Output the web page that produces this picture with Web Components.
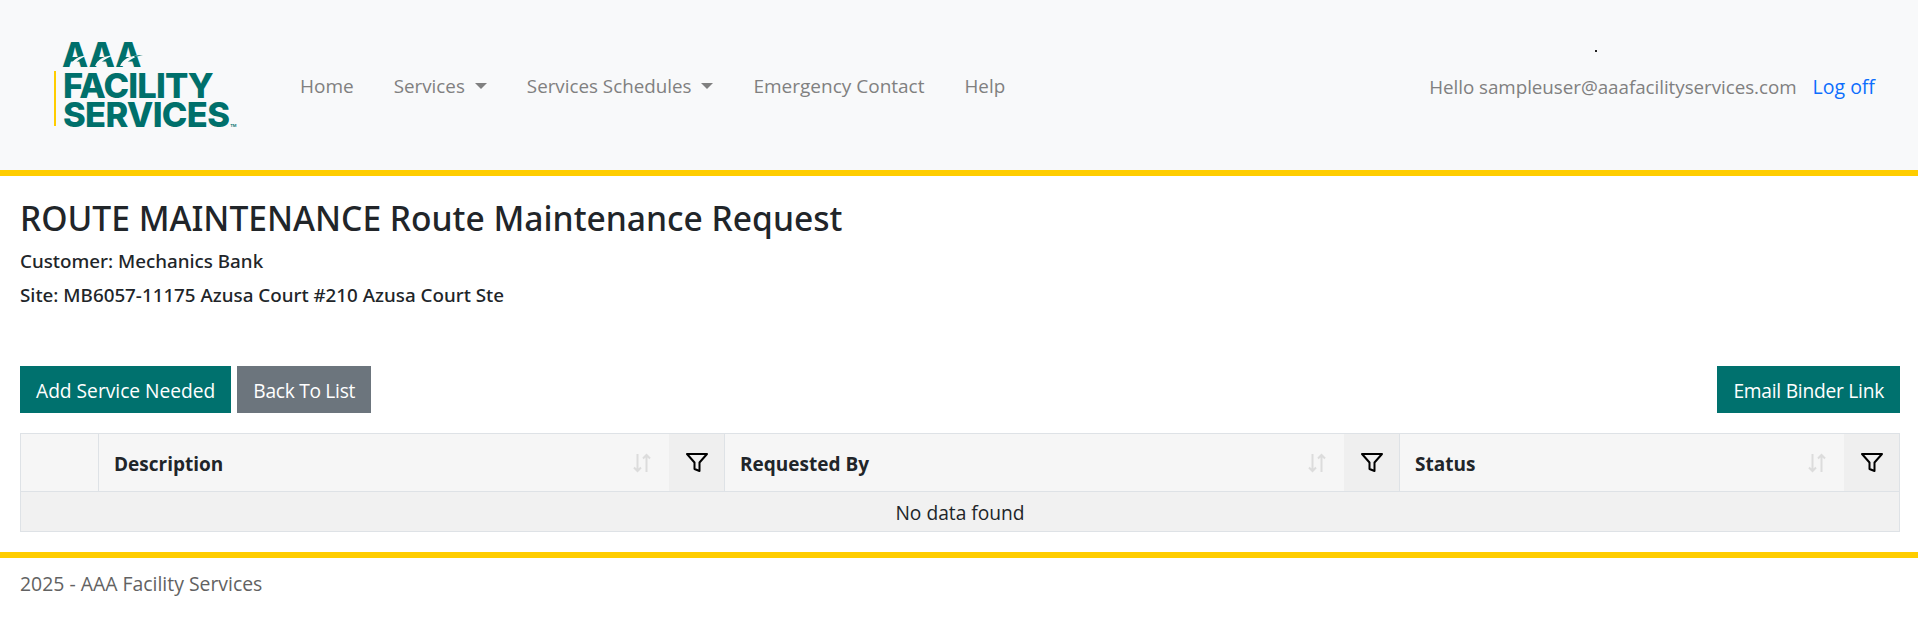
<!DOCTYPE html>
<html>
<head>
<meta charset="utf-8">
<title>Route Maintenance Request</title>
<style>
  html, body { margin: 0; padding: 0; background: #fff; }
  body { font-family: "Open Sans", "Noto Sans", sans-serif; font-size: 19.2px; color: #212529; }
</style>
</head>
<body>
<app-nav>
  <aaa-logo slot="brand"></aaa-logo>
  <nav-link style="font-size:19px">Home</nav-link>
  <nav-link caret>Services</nav-link>
  <nav-link caret>Services Schedules</nav-link>
  <nav-link style="font-size:19px">Emergency Contact</nav-link>
  <nav-link>Help</nav-link>
  <span slot="user">Hello sampleuser@aaafacilityservices.com</span>
  <a slot="logoff">Log off</a>
</app-nav>
<page-heading title="ROUTE MAINTENANCE Route Maintenance Request">
  <div>Customer: Mechanics Bank</div>
  <div>Site: MB6057-11175 Azusa Court #210 Azusa Court Ste</div>
</page-heading>
<action-bar>
  <app-button>Add Service Needed</app-button>
  <app-button kind="secondary" style="letter-spacing:-.3px">Back To List</app-button>
  <app-button slot="right" style="letter-spacing:-.25px">Email Binder Link</app-button>
</action-bar>
<data-table empty="No data found">
  <table-head style="width:626px">Description</table-head>
  <table-head style="width:675px">Requested By</table-head>
  <table-head style="flex:1">Status</table-head>
</data-table>
<app-footer>2025 - AAA Facility Services</app-footer>

<script>
class AaaLogo extends HTMLElement {
    constructor() {
        super();
        this.attachShadow({ mode: 'open' });
        this.shadowRoot.innerHTML = `
            <style>
                :host { display: block; position: relative; width: 190px; height: 90px; color: #00706b;
                    font-family: "Inter", sans-serif; font-weight: 800; line-height: 1; }
                .aaa { height: 30px; padding-left: 8px; font-size: 34px; line-height: 28px; letter-spacing: 0; position: relative; }
                .aaa svg { position: absolute; left: 0; top: 0; }
                .words { border-left: 2px solid #ffcd00; padding-left: 7px; }
                .line { height: 29px; line-height: 30px; font-size: 34.500px; white-space: nowrap; }
                .line.two { height: 26px; }
                .one { letter-spacing: -.8px; }
                .two { letter-spacing: -.7px; }
                .tm { font-size: 4px; font-weight: 600; letter-spacing: 0; margin-left: 1px; }
            </style>
            <div class="aaa">AAA
                <svg width="100" height="30" viewBox="0 0 100 30">
                    <path d="M16 25 C19 18 25 15 34 14 C27 17 22 20 20 25Z" fill="#f8f9fa"/>
                    <path d="M41 25 C44 18 50 15 60 14 C53 17 47 20 45 25Z" fill="#f8f9fa"/>
                    <path d="M66 25 C69 18 75 15 86 14 C79 17 73 20 71 25Z" fill="#f8f9fa"/>
                    <path d="M80 15 C83 14.200 86 14 89 14 C86 14.800 84 15.300 81 16.200Z" fill="#00706b"/>
                </svg>
            </div>
            <div class="words">
                <div class="line one">FACILITY</div>
                <div class="line two">SERVICES<span class="tm">TM</span></div>
            </div>
        `;
    }
}

class AppNav extends HTMLElement {
    constructor() {
        super();
        this.attachShadow({ mode: 'open' });
        this.shadowRoot.innerHTML = `
            <style>
                :host { display: flex; align-items: center; position: relative; box-sizing: border-box; height: 176px;
                    background: #f8f9fa; border-bottom: 6px solid #ffcd00; padding: 2px 43px 0 54px; font-size: 18.800px; }
                .links { display: flex; margin-left: 36px; }
                .right { margin-left: auto; display: flex; align-items: baseline; gap: 16px; color: #808080; }
                ::slotted([slot=user]) { letter-spacing: -.04px; }
                ::slotted([slot=logoff]) { color: #0d6efd; font-size: 19.500px; }
                .dot { position: absolute; left: 1595px; top: 50px; width: 2px; height: 2px; background: #222; }
            </style>
            <slot name="brand"></slot>
            <div class="links"><slot></slot></div>
            <div class="right"><slot name="user"></slot><slot name="logoff"></slot></div>
            <div class="dot"></div>
        `;
    }
}

class NavLink extends HTMLElement {
    constructor() {
        super();
        this.attachShadow({ mode: 'open' });
        this.shadowRoot.innerHTML = `
            <style>
                :host { display: block; padding: 0 20px; color: #808080; white-space: nowrap; }
                .caret { display: none; width: 0; height: 0; margin-left: 10px; vertical-align: 4px;
                    border-top: 6px solid #808080; border-left: 6px solid transparent; border-right: 6px solid transparent; }
                :host([caret]) .caret { display: inline-block; }
            </style>
            <slot></slot><span class="caret"></span>
        `;
    }
}

class PageHeading extends HTMLElement {
    constructor() {
        super();
        this.attachShadow({ mode: 'open' });
    }
    connectedCallback() {
        this.shadowRoot.innerHTML = `
            <style>
                :host { display: block; padding: 23px 20px 0; font-family: "Noto Sans", sans-serif; }
                h1 { margin: 0 0 7px; font-size: 33.600px; line-height: 38px; font-weight: 500; color: #212529; }
                ::slotted(div) { line-height: 34px; font-weight: 500; font-size: 18.800px; }
            </style>
            <h1></h1>
            <slot></slot>
        `;
        this.shadowRoot.querySelector('h1').textContent = this.getAttribute('title');
    }
}

class ActionBar extends HTMLElement {
    constructor() {
        super();
        this.attachShadow({ mode: 'open' });
        this.shadowRoot.innerHTML = `
            <style>
                :host { display: flex; gap: 6px; padding: 0 18px 0 20px; margin-top: 54px; }
                .push { margin-left: auto; }
            </style>
            <slot></slot>
            <div class="push"><slot name="right"></slot></div>
        `;
    }
}

class AppButton extends HTMLElement {
    constructor() {
        super();
        this.attachShadow({ mode: 'open' });
        this.shadowRoot.innerHTML = `
            <style>
                :host { display: inline-block; box-sizing: border-box; height: 47px; padding: 3px 16px 0; line-height: 44px;
                    background: #00716e; color: #fff; white-space: nowrap; }
                :host([kind=secondary]) { background: #6c757d; }
            </style>
            <slot></slot>
        `;
    }
}

class DataTable extends HTMLElement {
    constructor() {
        super();
        this.attachShadow({ mode: 'open' });
    }
    connectedCallback() {
        this.shadowRoot.innerHTML = `
            <style>
                :host { display: block; box-sizing: border-box; margin: 20px 18px 0 20px; border: 1px solid #dee2e6; }
                .head { display: flex; height: 58px; background: #f6f6f6; border-bottom: 1px solid #dee2e6; box-sizing: border-box; }
                .blank { width: 77px; flex: none; border-right: 1px solid #dee2e6; }
                .empty { height: 39px; padding-top: 1px; box-sizing: border-box; line-height: 39px; background: #f1f1f1; text-align: center; }
            </style>
            <div class="head"><div class="blank"></div><slot></slot></div>
            <div class="empty"></div>
        `;
        this.shadowRoot.querySelector('.empty').textContent = this.getAttribute('empty');
    }
}

class TableHead extends HTMLElement {
    constructor() {
        super();
        this.attachShadow({ mode: 'open' });
        this.shadowRoot.innerHTML = `
            <style>
                :host { display: flex; align-items: center; box-sizing: border-box; flex: none; font-weight: 700; font-size: 19px; border-right: 1px solid #dee2e6; }
                :host(:last-child) { border-right: 0; }
                .label { flex: 1; padding: 2px 0 0 15px; }
                .sort { margin-right: 18px; display: block; }
                .filter { align-self: stretch; width: 55px; background: #efefef; display: flex; align-items: center; justify-content: center; }
            </style>
            <div class="label"><slot></slot></div>
            <svg class="sort" width="18" height="20" viewBox="0 0 18 20" fill="none" stroke="#dcdcdc" stroke-width="2">
                <path d="M4.500 1V18M1 14.500L4.500 18L8 14.500M13.500 19V2M10 5.500L13.500 2L17 5.500"/>
            </svg>
            <div class="filter">
                <svg width="22" height="21" viewBox="0 0 22 21" fill="none" stroke="#000" stroke-width="2" stroke-linejoin="round">
                    <path d="M1 2H21L13.500 10.500V19L8.500 17V10.500Z"/>
                </svg>
            </div>
        `;
    }
}

class AppFooter extends HTMLElement {
    constructor() {
        super();
        this.attachShadow({ mode: 'open' });
        this.shadowRoot.innerHTML = `
            <style>
                :host { display: block; margin-top: 20px; border-top: 6px solid #ffcd00; padding: 12px 20px 0; color: #626262; line-height: 27px; font-size: 19.400px; }
            </style>
            <slot></slot>
        `;
    }
}

customElements.define('aaa-logo', AaaLogo);
customElements.define('app-nav', AppNav);
customElements.define('nav-link', NavLink);
customElements.define('page-heading', PageHeading);
customElements.define('action-bar', ActionBar);
customElements.define('app-button', AppButton);
customElements.define('data-table', DataTable);
customElements.define('table-head', TableHead);
customElements.define('app-footer', AppFooter);
</script>
</body>
</html>
